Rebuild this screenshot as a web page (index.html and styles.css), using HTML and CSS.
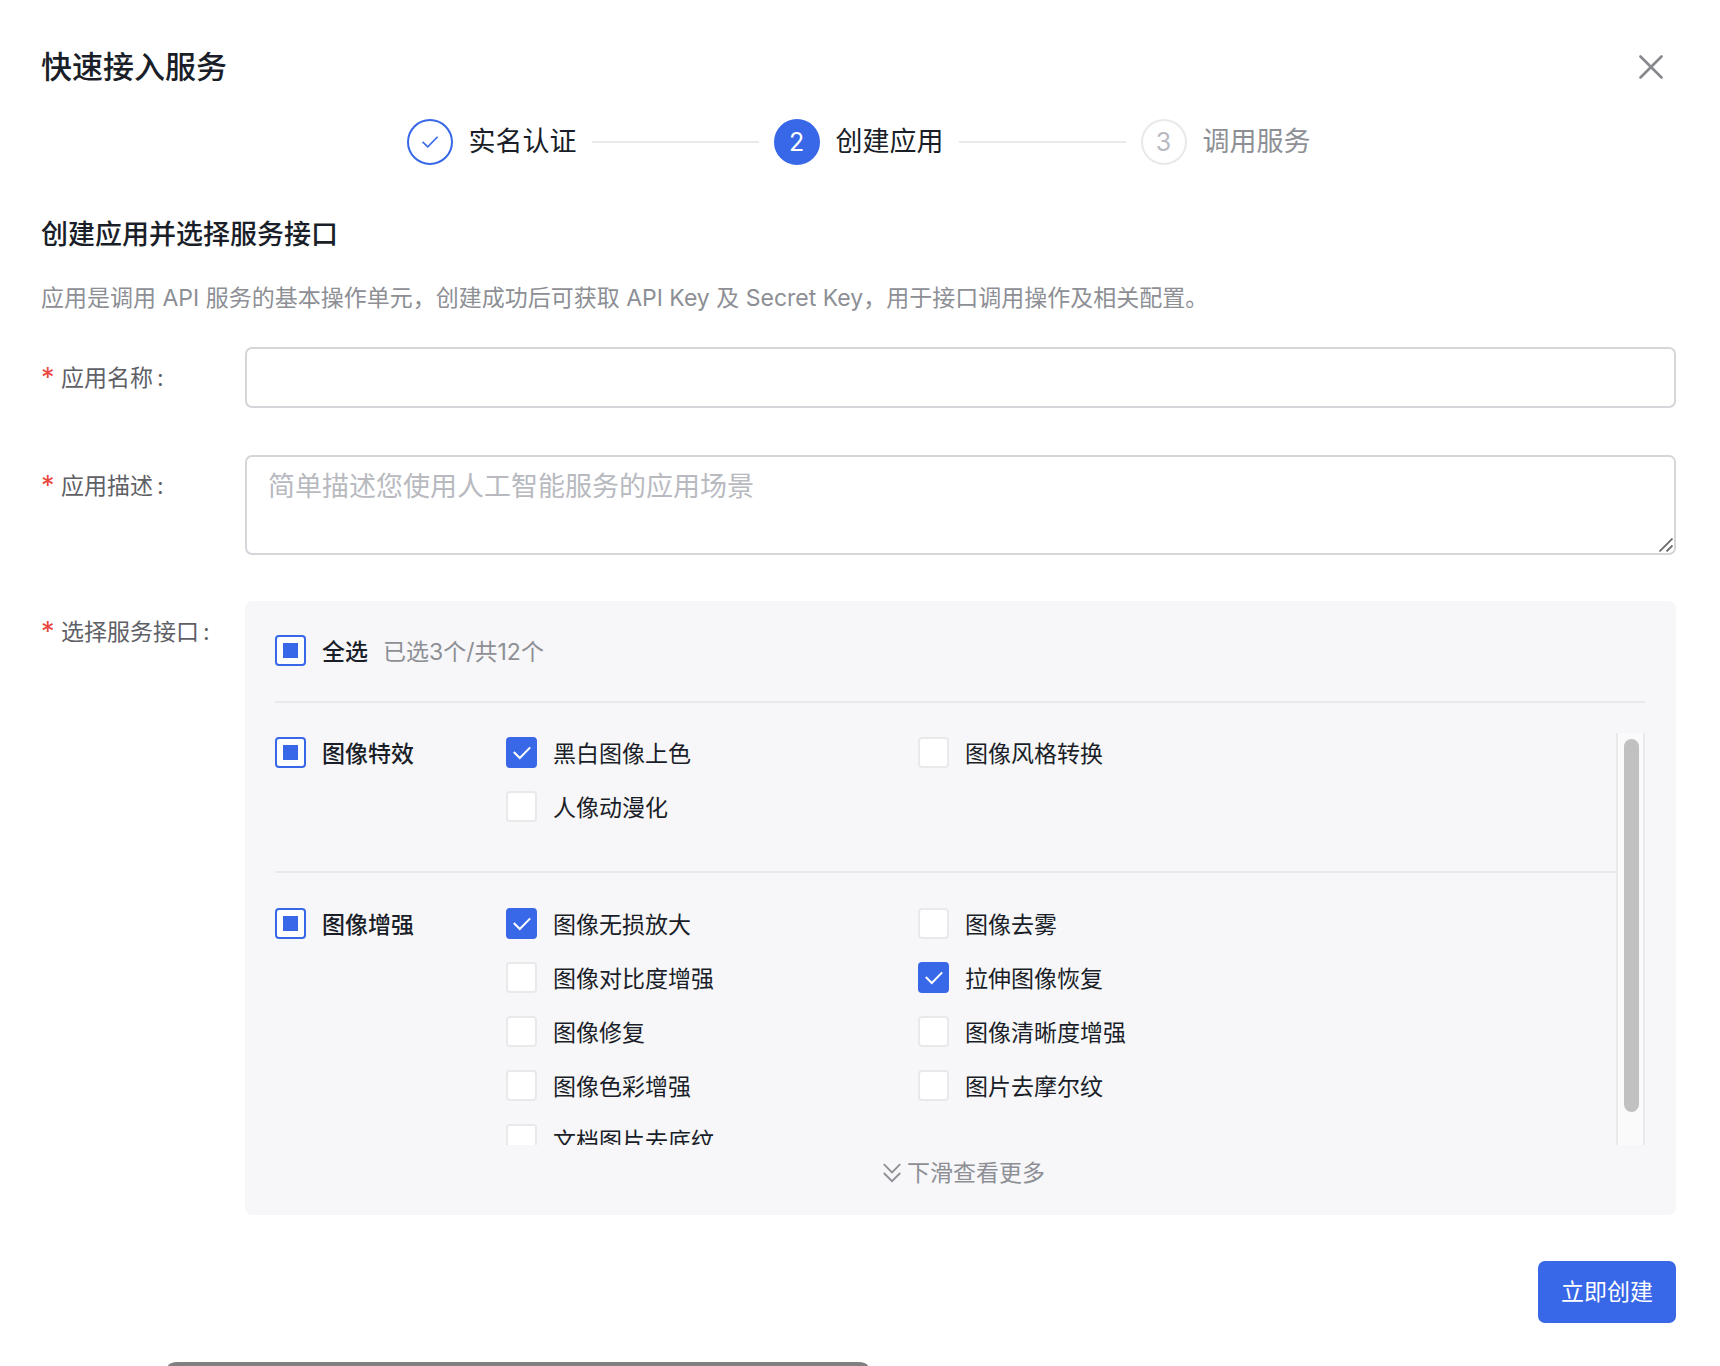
FILE: index.html
```html
<!DOCTYPE html>
<html lang="zh-CN">
<head>
    <meta charset="UTF-8">
    <meta name="viewport" content="width=device-width, initial-scale=1.0">
    <title>快速接入服务</title>
    <link rel="stylesheet" href="styles.css">
</head>
<body>
    <main class="dialog">
        <header class="dialog-header">
            <h1>快速接入服务</h1>
            <button type="button" class="close" aria-label="关闭">
                <svg width="24" height="24" viewBox="0 0 24 24" fill="none" stroke="currentColor" stroke-width="2.6" stroke-linecap="round"><path d="M1.5 1.5l21 21M22.5 1.5l-21 21"/></svg>
            </button>
        </header>

        <ol class="steps">
            <li class="step done">
                <span class="step-icon">
                    <svg width="18" height="14" viewBox="0 0 18 14" fill="none" stroke="currentColor" stroke-width="1.6"><path d="M1.6 6.8l5.2 5L16.6 1.8"/></svg>
                </span>
                <span class="step-title">实名认证</span>
            </li>
            <li class="step active">
                <span class="step-icon">2</span>
                <span class="step-title">创建应用</span>
            </li>
            <li class="step">
                <span class="step-icon">3</span>
                <span class="step-title">调用服务</span>
            </li>
        </ol>

        <h2>创建应用并选择服务接口</h2>
        <p class="hint">应用是调用 API 服务的基本操作单元，创建成功后可获取 API Key 及 Secret Key，用于接口调用操作及相关配置。</p>

        <form id="app-form">
            <div class="form-row">
                <label class="form-label" for="app-name">应用名称<span class="colon">:</span></label>
                <input type="text" id="app-name" class="text-input">
            </div>
            <div class="form-row">
                <label class="form-label" for="app-desc">应用描述<span class="colon">:</span></label>
                <div class="textarea-wrap">
                    <textarea id="app-desc" class="text-input" placeholder="简单描述您使用人工智能服务的应用场景"></textarea>
                    <svg class="resizer" width="14" height="14" viewBox="0 0 14 14" fill="none" stroke="#6b6b6b" stroke-width="1.8"><path d="M.5 13.5l13-13M7.5 13.5l6-6"/></svg>
                </div>
            </div>
            <div class="form-row">
                <span class="form-label" id="api-label">选择服务接口<span class="colon">:</span></span>
                <div class="panel" role="group" aria-labelledby="api-label">
                    <div class="panel-header">
                        <label class="check strong"><input type="checkbox" class="partial">全选</label>
                        <span class="count">已选3个/共12个</span>
                    </div>
                    <div class="scroll-area">
                        <div class="list">
                            <div class="group">
                                <label class="check strong"><input type="checkbox" class="partial">图像特效</label>
                                <div class="items">
                                    <label class="check"><input type="checkbox" checked>黑白图像上色</label>
                                    <label class="check"><input type="checkbox">图像风格转换</label>
                                    <label class="check"><input type="checkbox">人像动漫化</label>
                                </div>
                            </div>
                            <div class="group">
                                <label class="check strong"><input type="checkbox" class="partial">图像增强</label>
                                <div class="items">
                                    <label class="check"><input type="checkbox" checked>图像无损放大</label>
                                    <label class="check"><input type="checkbox">图像去雾</label>
                                    <label class="check"><input type="checkbox">图像对比度增强</label>
                                    <label class="check"><input type="checkbox" checked>拉伸图像恢复</label>
                                    <label class="check"><input type="checkbox">图像修复</label>
                                    <label class="check"><input type="checkbox">图像清晰度增强</label>
                                    <label class="check"><input type="checkbox">图像色彩增强</label>
                                    <label class="check"><input type="checkbox">图片去摩尔纹</label>
                                    <label class="check"><input type="checkbox">文档图片去底纹</label>
                                </div>
                            </div>
                        </div>
                        <div class="scrollbar"><div class="thumb"></div></div>
                    </div>
                    <div class="more">
                        <svg width="18" height="20" viewBox="0 0 18 20" fill="none" stroke="currentColor" stroke-width="1.8"><path d="M.8 1.2L9 9.4l8.2-8.2M.8 10L9 18.2l8.2-8.2"/></svg>
                        <span>下滑查看更多</span>
                    </div>
                </div>
            </div>
            <div class="form-footer">
                <button type="submit" class="submit">立即创建</button>
            </div>
        </form>
    </main>
    <div class="page-edge"></div>

    <script>
        document.querySelectorAll('.partial').forEach(function(box) {
            box.indeterminate = true;
        });

        const list = document.querySelector('.list');
        const thumb = document.querySelector('.thumb');

        list.addEventListener('scroll', function() {
            const free = thumb.parentElement.clientHeight - thumb.offsetHeight - 12;
            const top = list.scrollTop / (list.scrollHeight - list.clientHeight) * free;
            thumb.style.marginTop = top + 'px';
        });
    </script>
</body>
</html>
```
FILE: styles.css
```css
* {
    box-sizing: border-box;
}
body {
    font-family: Inter, "Noto Sans CJK SC", sans-serif;
    font-size: 23px;
    color: #1a1e28;
    background-color: #fff;
    margin: 0;
}
h1, h2, p, ol {
    margin: 0;
    padding: 0;
    font-weight: 500;
}
input, textarea, button {
    font-family: inherit;
    margin: 0;
}
.dialog {
    padding: 45px 44px 0 41px;
}
.dialog-header {
    display: flex;
    align-items: center;
    justify-content: space-between;
}
h1 {
    font-size: 31px;
    line-height: 44px;
}
.close {
    display: flex;
    padding: 0;
    margin-right: 13px;
    border: none;
    background: none;
    color: #86888d;
    cursor: pointer;
}

/* steps */
.steps {
    display: flex;
    justify-content: center;
    margin-top: 30px;
    list-style: none;
    font-size: 27px;
    font-weight: 400;
}
.step {
    display: flex;
    align-items: center;
    color: #8d8f95;
}
.step + .step::before {
    content: "";
    width: 167px;
    height: 2px;
    margin: 0 15px;
    background: #e8e9eb;
}
.step-icon {
    display: flex;
    align-items: center;
    justify-content: center;
    width: 46px;
    height: 46px;
    margin-right: 16px;
    border: 2px solid #e8e9eb;
    border-radius: 50%;
    color: #b8babf;
    font-size: 25px;
}
.step-title {
    line-height: 46px;
}
.done, .active {
    color: #1a1e28;
}
.done .step-icon {
    border-color: #3868e8;
    color: #3868e8;
}
.active .step-icon {
    border-color: #3868e8;
    background: #3868e8;
    color: #fff;
}

h2 {
    margin-top: 51px;
    font-size: 27px;
    line-height: 38px;
}
.hint {
    margin: 27px 0 32px;
    color: #8d8f95;
    line-height: 34px;
    font-weight: 400;
}

/* form */
.form-row {
    display: flex;
    margin-bottom: 46px;
}
.form-label {
    display: flex;
    flex: 0 0 204px;
    color: #5e6066;
    line-height: 62px;
}
.form-label::before {
    content: "*";
    width: 20px;
    color: #e8483f;
    font-size: 27px;
}
.colon {
    margin-left: 4px;
}
.text-input {
    display: block;
    width: 100%;
    height: 61px;
    padding: 10px 21px;
    border: 2px solid #d4d6da;
    border-radius: 7px;
    background: #fff;
    color: #1a1e28;
    font-size: 27px;
    line-height: 40px;
    outline: none;
}
textarea.text-input {
    height: 100px;
    resize: none;
}
.text-input::placeholder {
    color: #b8babf;
}
.textarea-wrap {
    position: relative;
    flex: 1;
}
.resizer {
    position: absolute;
    right: 3px;
    bottom: 3px;
}

/* service list */
.panel {
    flex: 1;
    padding: 30px 31px 25px 30px;
    border-radius: 7px;
    background: #f7f7f9;
}
.panel-header {
    display: flex;
    align-items: center;
    padding-bottom: 32px;
    border-bottom: 2px solid #e8e9eb;
}
.count {
    margin-left: 15px;
    color: #8d8f95;
}
.check {
    display: flex;
    align-items: center;
    height: 38px;
    cursor: pointer;
}
.strong {
    font-weight: 500;
}
.check input {
    appearance: none;
    width: 31px;
    height: 31px;
    margin-right: 16px;
    border: 2px solid #e8e9eb;
    border-radius: 4px;
    background: #fff;
}
.check input:checked {
    border-color: #3868e8;
    background: #3868e8 url("data:image/svg+xml,%3Csvg xmlns='http://www.w3.org/2000/svg' viewBox='0 0 31 31' fill='none' stroke='white' stroke-width='2'%3E%3Cpath d='M7.8 15l6 6L24.2 10.4'/%3E%3C/svg%3E") center / 31px 31px no-repeat;
}
.check input:indeterminate {
    display: flex;
    align-items: center;
    justify-content: center;
    border-color: #3868e8;
}
.check input:indeterminate::before {
    content: "";
    width: 15px;
    height: 15px;
    background: #3868e8;
}
.scroll-area {
    display: flex;
    height: 412px;
    margin-top: 30px;
}
.list {
    flex: 1;
    padding-bottom: 13px;
    overflow-y: scroll;
    scrollbar-width: none;
}
.scrollbar {
    width: 29px;
    padding: 6px;
    border: solid #e8e9eb;
    border-width: 0 2px;
    background: #fafafa;
}
.thumb {
    width: 15px;
    height: 373px;
    border-radius: 8px;
    background: #c1c1c1;
}
.group {
    display: grid;
    grid-template-columns: 231px 1fr;
    align-items: start;
}
.group + .group {
    margin-top: 46px;
    padding-top: 31px;
    border-top: 2px solid #e8e9eb;
}
.items {
    display: grid;
    grid-template-columns: repeat(2, 412px);
    row-gap: 16px;
}
.more {
    display: flex;
    align-items: center;
    justify-content: center;
    gap: 6px;
    margin-top: 11px;
    padding-left: 8px;
    color: #8d8f95;
    line-height: 34px;
}
.form-footer {
    display: flex;
    justify-content: flex-end;
}
.submit {
    padding: 0 23px;
    border: none;
    border-radius: 7px;
    background: #3868e8;
    color: #fff;
    font-size: 23px;
    line-height: 62px;
    cursor: pointer;
}

/* top of the bar that shows below the dialog */
.page-edge {
    position: fixed;
    left: 168px;
    bottom: 0;
    width: 700px;
    height: 4px;
    border-radius: 10px 10px 0 0 / 4px 4px 0 0;
    background: #808080;
}
```
